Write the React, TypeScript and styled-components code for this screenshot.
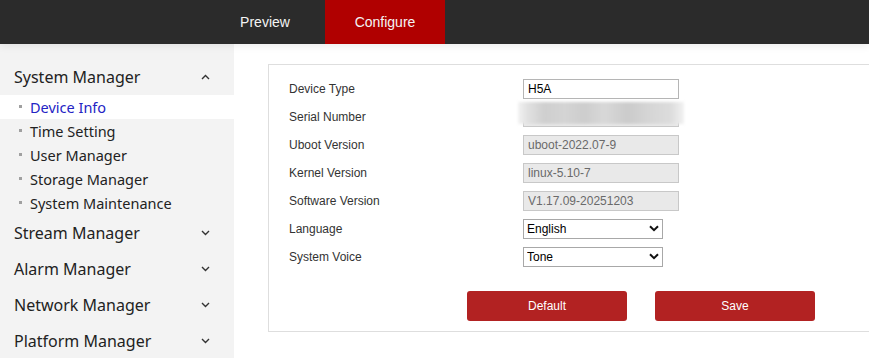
import React from "react";
import styled, { createGlobalStyle } from "styled-components";

const Global = createGlobalStyle`
  html, body { margin: 0; padding: 0; background: #fff; overflow: hidden; }
  body { font-family: "Liberation Sans", Arial, sans-serif; }
`;

const Page = styled.div`
  width: 869px;
  height: 358px;
  display: flex;
  flex-direction: column;
  overflow: hidden;
`;

const Header = styled.div`
  height: 44px;
  flex: none;
  background: #2b2b2b;
  display: flex;
  padding-left: 205px;
  box-shadow: 0 2px 8px rgba(0, 0, 0, 0.08);
  position: relative;
  z-index: 1;
`;

const Tab = styled.div<{ $active?: boolean }>`
  width: 120px;
  display: flex;
  align-items: center;
  justify-content: center;
  font-family: "Liberation Sans", Arial, sans-serif;
  font-size: 14px;
  color: #f4f4f4;
  background: ${(p) => (p.$active ? "#b00000" : "transparent")};
`;

const Body = styled.div`
  flex: 1;
  display: flex;
  min-height: 0;
`;

const Sidebar = styled.div`
  width: 234px;
  flex: none;
  background: #f3f3f3;
  padding-top: 15px;
  font-family: "Noto Sans", "Open Sans", sans-serif;
`;

const GroupHeader = styled.div`
  height: 36px;
  box-sizing: border-box;
  display: flex;
  align-items: center;
  justify-content: space-between;
  padding: 0 24px 1px 14px;
  font-size: 16px;
  color: #222;
`;

const Item = styled.div<{ $active?: boolean }>`
  height: 24px;
  box-sizing: border-box;
  display: flex;
  align-items: center;
  padding: 0 0 1px 19px;
  font-size: 14.5px;
  color: ${(p) => (p.$active ? "#2323c4" : "#222")};
  background: ${(p) => (p.$active ? "#ffffff" : "transparent")};
`;

const Dot = styled.span`
  width: 3px;
  height: 3px;
  background: #a0a0a0;
  margin-right: 8px;
  flex: none;
`;

const Content = styled.div`
  flex: 1;
  padding: 20px 0 0 34px;
  min-width: 0;
`;

const Panel = styled.div`
  width: 660px;
  height: 268px;
  box-sizing: border-box;
  border: 1px solid #dedede;
  padding: 10px 0 10px 20px;
  display: flex;
  flex-direction: column;
`;

const Row = styled.div`
  height: 28px;
  display: flex;
  align-items: center;
`;

const Label = styled.div`
  width: 234px;
  font-size: 12px;
  color: #333;
`;

const Field = styled.div`
  position: relative;
  display: flex;
`;

const TextInput = styled.input<{ $disabled?: boolean }>`
  width: 156px;
  height: 20px;
  box-sizing: border-box;
  border: 1px solid ${(p) => (p.$disabled ? "#c8c8c8" : "#b5b5b5")};
  background: ${(p) => (p.$disabled ? "#e9e9e9" : "#fff")};
  color: ${(p) => (p.$disabled ? "#6a6a6a" : "#000")};
  font-family: "Liberation Sans", Arial, sans-serif;
  font-size: 12px;
  padding: 0 0 0 4px;
  margin: 0;
  outline: none;
`;

const Blur = styled.div`
  position: absolute;
  left: -5px;
  top: -5px;
  width: 166px;
  height: 22px;
  background: linear-gradient(
    90deg,
    #f2f2f2 0%,
    #e0e0e0 6%,
    #cfcfcf 16%,
    #d4d4d4 28%,
    #cdcdcd 40%,
    #d8d8d8 52%,
    #cbcbcb 66%,
    #d6d6d6 80%,
    #dcdcdc 92%,
    #f2f2f2 100%
  );
  filter: blur(1.5px);
`;

const Select = styled.select`
  width: 140px;
  height: 20px;
  box-sizing: border-box;
  border: 1px solid #a8a8a8;
  border-radius: 0;
  background: #fff;
  color: #000;
  font-family: "Liberation Sans", Arial, sans-serif;
  font-size: 12px;
  padding: 0 0 0 3px;
  margin: 0;
  appearance: none;
  -webkit-appearance: none;
  outline: none;
`;

const Caret = styled.svg`
  position: absolute;
  right: 4px;
  top: 6px;
  pointer-events: none;
`;

const Buttons = styled.div`
  display: flex;
  gap: 28px;
  padding-left: 178px;
  margin-top: 20px;
`;

const Button = styled.button`
  width: 160px;
  height: 30px;
  border: none;
  border-radius: 3px;
  background: #b22222;
  color: #fff;
  font-family: "Liberation Sans", Arial, sans-serif;
  font-size: 12px;
  cursor: pointer;
`;

const Chevron = ({ up }: { up?: boolean }) => (
  <svg width="9" height="6" viewBox="0 0 9 6">
    <path
      d={up ? "M1 5 L4.5 1.5 L8 5" : "M1 1 L4.5 4.5 L8 1"}
      fill="none"
      stroke="#333"
      strokeWidth="1.4"
    />
  </svg>
);

const SelectBox = ({ value, options }: { value: string; options: string[] }) => (
  <Field>
    <Select defaultValue={value}>
      {options.map((o) => (
        <option key={o}>{o}</option>
      ))}
    </Select>
    <Caret width="10" height="7" viewBox="0 0 10 7">
      <path d="M1 1.2 L5 5.2 L9 1.2" fill="none" stroke="#111" strokeWidth="2" />
    </Caret>
  </Field>
);

export default function App() {
  return (
    <Page>
      <Global />
      <Header>
        <Tab>Preview</Tab>
        <Tab $active>Configure</Tab>
      </Header>
      <Body>
        <Sidebar>
          <GroupHeader>
            System Manager <Chevron up />
          </GroupHeader>
          <Item $active>
            <Dot />
            Device Info
          </Item>
          <Item>
            <Dot />
            Time Setting
          </Item>
          <Item>
            <Dot />
            User Manager
          </Item>
          <Item>
            <Dot />
            Storage Manager
          </Item>
          <Item>
            <Dot />
            System Maintenance
          </Item>
          <GroupHeader>
            Stream Manager <Chevron />
          </GroupHeader>
          <GroupHeader>
            Alarm Manager <Chevron />
          </GroupHeader>
          <GroupHeader>
            Network Manager <Chevron />
          </GroupHeader>
          <GroupHeader>
            Platform Manager <Chevron />
          </GroupHeader>
        </Sidebar>
        <Content>
          <Panel>
            <Row>
              <Label>Device Type</Label>
              <Field>
                <TextInput defaultValue="H5A" />
              </Field>
            </Row>
            <Row>
              <Label>Serial Number</Label>
              <Field>
                <TextInput $disabled readOnly defaultValue="" />
                <Blur />
              </Field>
            </Row>
            <Row>
              <Label>Uboot Version</Label>
              <Field>
                <TextInput $disabled readOnly defaultValue="uboot-2022.07-9" />
              </Field>
            </Row>
            <Row>
              <Label>Kernel Version</Label>
              <Field>
                <TextInput $disabled readOnly defaultValue="linux-5.10-7" />
              </Field>
            </Row>
            <Row>
              <Label>Software Version</Label>
              <Field>
                <TextInput $disabled readOnly defaultValue="V1.17.09-20251203" />
              </Field>
            </Row>
            <Row>
              <Label>Language</Label>
              <SelectBox value="English" options={["English", "中文"]} />
            </Row>
            <Row>
              <Label>System Voice</Label>
              <SelectBox value="Tone" options={["Tone", "Voice", "Off"]} />
            </Row>
            <Buttons>
              <Button>Default</Button>
              <Button>Save</Button>
            </Buttons>
          </Panel>
        </Content>
      </Body>
    </Page>
  );
}
